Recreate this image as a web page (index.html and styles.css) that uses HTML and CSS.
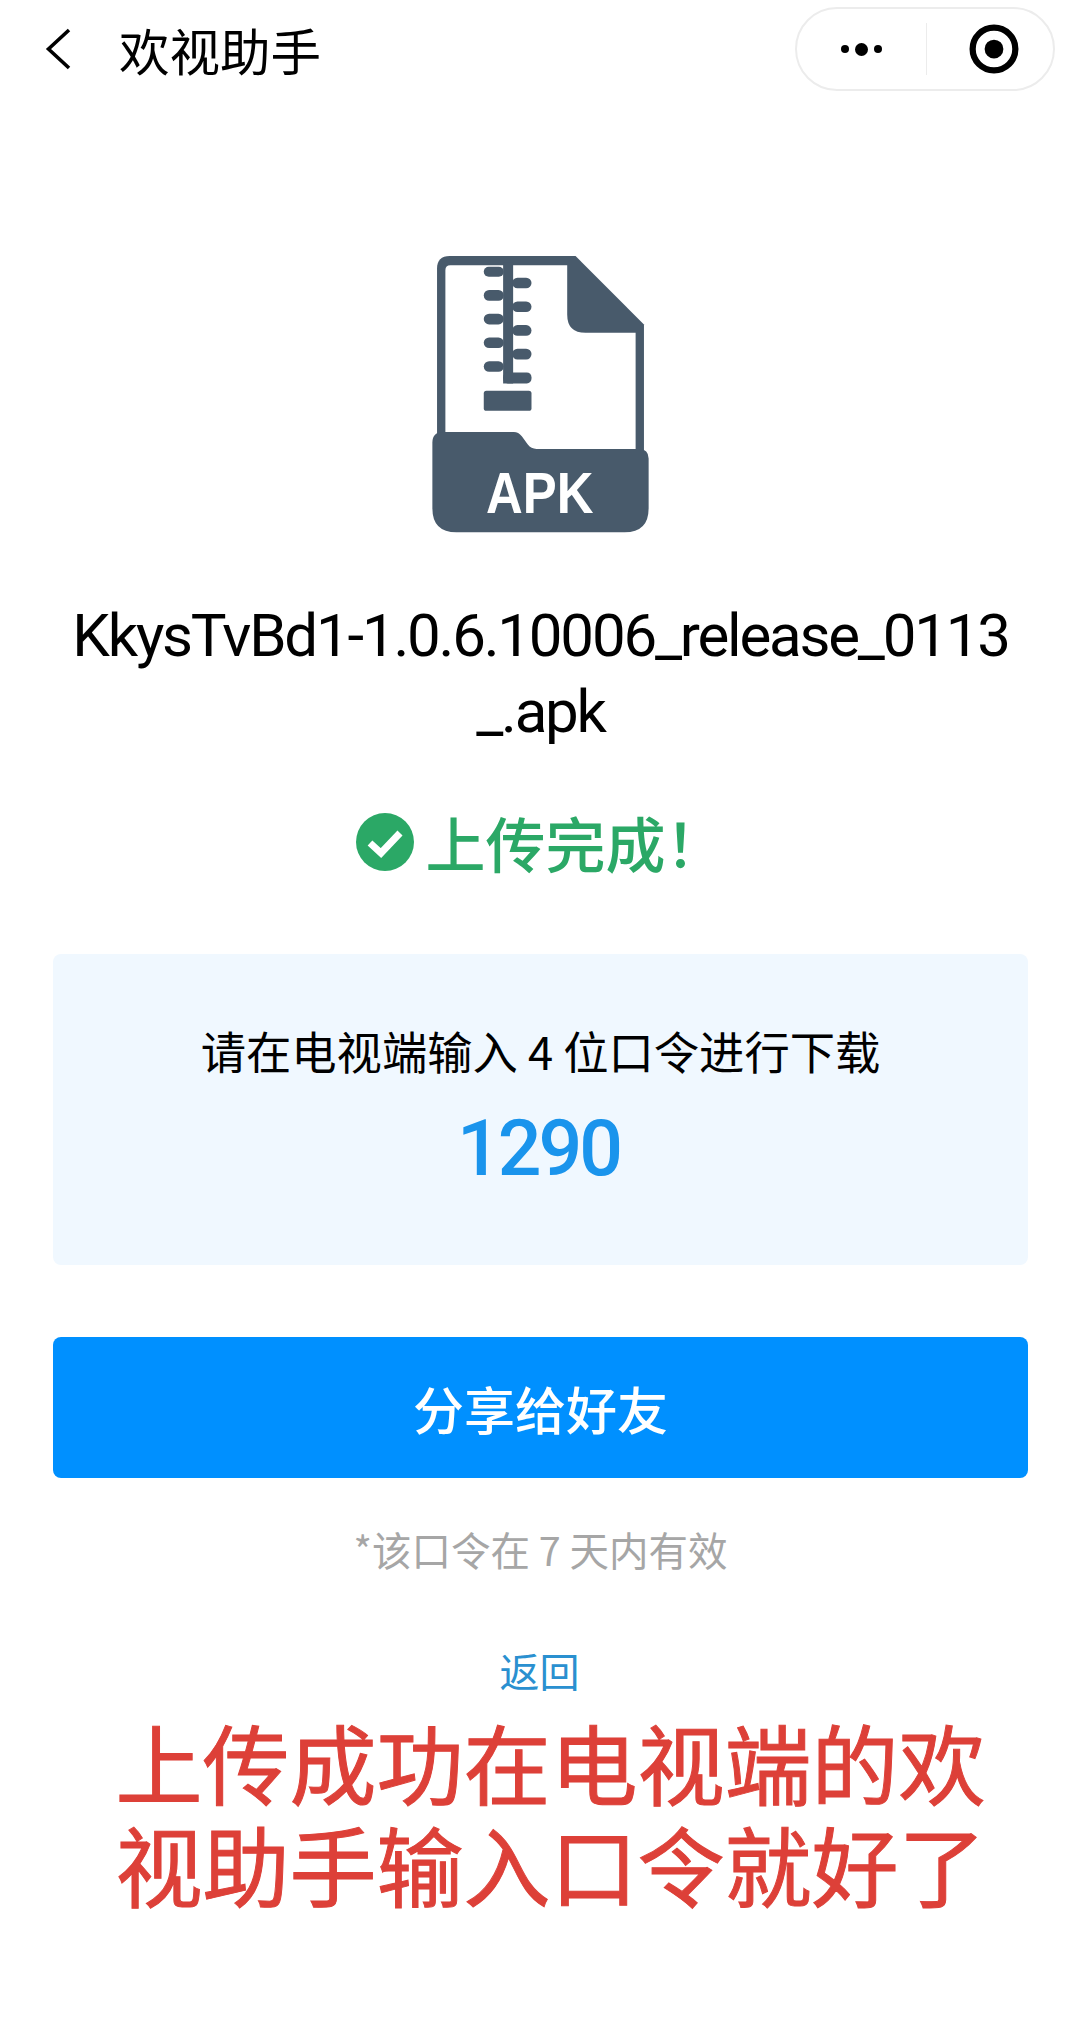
FILE: index.html
```html
<!DOCTYPE html>
<html lang="zh-CN">
<head>
  <meta charset="UTF-8" />
  <meta name="viewport" content="width=device-width, initial-scale=1.0" />
  <title>欢视助手</title>
  <link rel="stylesheet" href="styles.css">
</head>
<body>

  <header class="nav-bar">
    <svg class="back-icon" viewBox="0 0 26 42" aria-hidden="true">
      <path d="M24 2 L3.5 21 L24 40" fill="none" stroke="#000" stroke-width="3.6" />
    </svg>
    <h1 class="nav-title">欢视助手</h1>
    <div class="capsule">
      <div class="capsule-part">
        <span class="dot"></span><span class="dot dot-big"></span><span class="dot"></span>
      </div>
      <div class="capsule-line"></div>
      <div class="capsule-part capsule-part-right">
        <svg class="target-icon" viewBox="0 0 48 48" aria-hidden="true">
          <circle cx="24" cy="24" r="20.5" fill="none" stroke="#000" stroke-width="6" />
          <circle cx="24" cy="24" r="9" fill="#000" />
        </svg>
      </div>
    </div>
  </header>

  <main class="content">
    <svg class="file-icon" viewBox="96 50 648 830" aria-hidden="true">
      <path d="M148 50 H525 L730 255 V640 H110 V88 Q110 50 148 50 Z" fill="#485a6b" />
      <path d="M150 78 H500 V225 Q500 280 555 280 H705 V640 H135 V93 Q135 78 150 78 Z" fill="#fff" />
      <rect x="308" y="70" width="30" height="362" fill="#485a6b" />
      <rect x="250" y="82" width="60" height="30" rx="15" fill="#485a6b" />
      <rect x="250" y="152" width="60" height="32" rx="16" fill="#485a6b" />
      <rect x="250" y="223" width="60" height="32" rx="16" fill="#485a6b" />
      <rect x="250" y="294" width="60" height="32" rx="16" fill="#485a6b" />
      <rect x="250" y="365" width="60" height="32" rx="16" fill="#485a6b" />
      <rect x="335" y="115" width="58" height="32" rx="16" fill="#485a6b" />
      <rect x="335" y="186" width="58" height="32" rx="16" fill="#485a6b" />
      <rect x="335" y="257" width="58" height="32" rx="16" fill="#485a6b" />
      <rect x="335" y="328" width="58" height="32" rx="16" fill="#485a6b" />
      <rect x="308" y="399" width="85" height="33" rx="14" fill="#485a6b" />
      <rect x="250" y="454" width="143" height="60" rx="8" fill="#485a6b" />
      <path d="M128 577 H340 Q354 577 364 590 L382 615 Q392 628 408 628 H715 Q744 628 744 657 V806 Q744 878 672 878 H168 Q96 878 96 806 V609 Q96 577 128 577 Z" fill="#485a6b" />
      <text class="file-icon-label" x="418" y="821" textLength="322" lengthAdjust="spacingAndGlyphs">APK</text>
    </svg>

    <p class="file-name">KkysTvBd1-1.0.6.10006_release_0113_.apk</p>

    <div class="status">
      <svg class="status-icon" viewBox="0 0 58 58" aria-hidden="true">
        <circle cx="29" cy="29" r="29" fill="#2ba866" />
        <path d="M14 30 L25 40 L44 20" fill="none" stroke="#fff" stroke-width="7" />
      </svg>
      <span>上传完成！</span>
    </div>

    <section class="code-card">
      <p class="code-tip">请在电视端输入 4 位口令进行下载</p>
      <p class="code-value">1290</p>
    </section>

    <button class="share-btn" type="button">分享给好友</button>

    <p class="hint">*该口令在 7 天内有效</p>
    <a class="back-link" href="#back">返回</a>

    <p class="caption">上传成功在电视端的欢<br>视助手输入口令就好了</p>
  </main>

</body>
</html>
```

FILE: styles.css
```css
* {
  box-sizing: border-box;
}

body {
  margin: 0;
  background: #fff;
  font-family: Roboto, "Noto Sans CJK SC", sans-serif;
  color: #000;
}

p, h1 {
  margin: 0;
  font-weight: normal;
}

.nav-bar {
  display: flex;
  align-items: center;
  height: 98px;
  padding: 0 25px 0 45px;
}

.back-icon {
  width: 26px;
  height: 42px;
}

.nav-title {
  margin-left: 48px;
  font-family: "Noto Sans CJK SC", sans-serif;
  font-size: 50.5px;
  line-height: 98px;
}

.capsule {
  display: flex;
  align-items: center;
  width: 260px;
  height: 84px;
  margin-left: auto;
  border: 2px solid #ececec;
  border-radius: 42px;
}

.capsule-part {
  display: flex;
  flex: 1;
  align-items: center;
  justify-content: center;
  gap: 6px;
}

.capsule-part-right {
  flex: 0 0 126px;
  padding-left: 8px;
}

.capsule-line {
  width: 1px;
  height: 52px;
  background: #ececec;
}

.dot {
  width: 8px;
  height: 8px;
  border-radius: 50%;
  background: #000;
}

.dot-big {
  width: 13px;
  height: 13px;
}

.target-icon {
  width: 50px;
  height: 50px;
}

.content {
  display: flex;
  flex-direction: column;
  align-items: center;
  padding: 158px 52px 0 53px;
}

.file-icon {
  width: 217px;
  height: 277px;
}

.file-icon-label {
  font-family: "Liberation Sans", sans-serif;
  font-size: 172px;
  font-weight: bold;
  fill: #fff;
  text-anchor: middle;
}

.file-name {
  width: 950px;
  margin-top: 65px;
  font-size: 60px;
  letter-spacing: -2.2px;
  line-height: 76px;
  text-align: center;
  word-break: break-all;
}

.status {
  display: flex;
  align-items: center;
  gap: 12px;
  margin-top: 50px;
  font-family: "Noto Sans CJK SC", sans-serif;
  font-size: 60px;
  font-weight: 500;
  line-height: 84px;
  color: #2ba866;
}

.status-icon {
  width: 58px;
  height: 58px;
}

.code-card {
  width: 100%;
  height: 311px;
  margin-top: 70px;
  padding-top: 68px;
  background: #f0f8ff;
  border-radius: 8px;
  text-align: center;
}

.code-tip {
  font-family: "Noto Sans CJK SC", sans-serif;
  font-size: 45.3px;
  line-height: 56px;
}

.code-value {
  margin-top: 21px;
  margin-right: 4px;
  font-size: 77px;
  font-weight: 500;
  letter-spacing: -3px;
  line-height: 100px;
  color: #1a94ec;
}

.share-btn {
  display: block;
  width: 100%;
  height: 141px;
  margin-top: 72px;
  border: 0;
  border-radius: 8px;
  background: #0090ff;
  color: #fff;
  font-family: "Noto Sans CJK SC", sans-serif;
  font-size: 51px;
  font-weight: 500;
}

.hint {
  margin-top: 45px;
  font-family: "Noto Sans CJK SC", sans-serif;
  font-size: 39.5px;
  line-height: 52px;
  color: #a6a6a6;
}

.back-link {
  margin-top: 70px;
  margin-right: 2px;
  font-family: "Noto Sans CJK SC", sans-serif;
  font-size: 40px;
  line-height: 50px;
  color: #2a90d0;
  text-decoration: none;
}

.caption {
  margin-top: 15px;
  margin-left: 20px;
  font-family: "Noto Sans CJK SC", sans-serif;
  font-size: 87px;
  line-height: 102px;
  color: #dd4038;
  -webkit-text-stroke: 1px #dd4038;
  text-align: center;
  white-space: nowrap;
}
```
